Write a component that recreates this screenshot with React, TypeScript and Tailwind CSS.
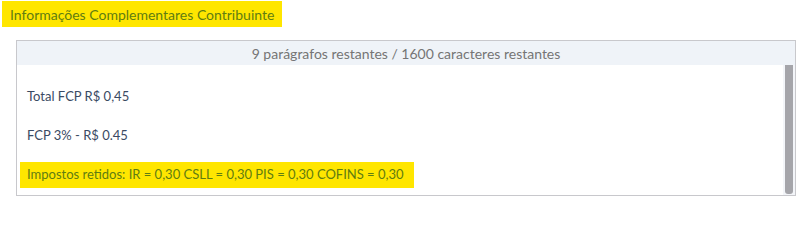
import React from 'react';

const lines = [
    { text: 'Total FCP R$ 0,45', highlight: false },
    { text: 'FCP 3% - R$ 0.45', highlight: false },
    { text: 'Impostos retidos: IR = 0,30 CSLL = 0,30 PIS = 0,30 COFINS = 0,30', highlight: true },
];

const App: React.FC = () => {
    return (
        <div className="w-[801px] h-[202px] bg-white font-['Lato',sans-serif] text-[14px]">
            {/* Section title */}
            <div className="pl-[2px] pt-px">
                <span className="inline-flex items-center h-[26px] px-2 bg-[#ffe600] text-[#5f7d12]">
                    Informações Complementares Contribuinte
                </span>
            </div>

            {/* Text area panel */}
            <div className="ml-4 mr-[5px] mt-[13px] border border-[#c8c8cc] h-[156px] flex flex-col">
                <div className="h-6 bg-[#eff3f8] flex items-center justify-center text-[#757575]">
                    9 parágrafos restantes / 1600 caracteres restantes
                </div>
                <div className="flex flex-1">
                    <div className="flex-1 pt-[19px] pl-[3px] flex flex-col gap-[13px] text-[13px]">
                        {lines.map((l) => (
                            <div
                                key={l.text}
                                className={
                                    l.highlight
                                        ? 'h-[26px] w-[394px] flex items-center pl-[7px] whitespace-nowrap bg-[#ffe600] text-[#5f7d12]'
                                        : 'h-[26px] flex items-center pl-[7px] whitespace-nowrap text-[#3a4a63]'
                                }
                            >
                                {l.text}
                            </div>
                        ))}
                    </div>
                    {/* Scrollbar */}
                    <div className="w-3 bg-[#f3f5f9] flex justify-center pb-px">
                        <div className="w-2 bg-[#a5a5aa] rounded-b-[3px]" />
                    </div>
                </div>
            </div>
        </div>
    );
};

export default App;
